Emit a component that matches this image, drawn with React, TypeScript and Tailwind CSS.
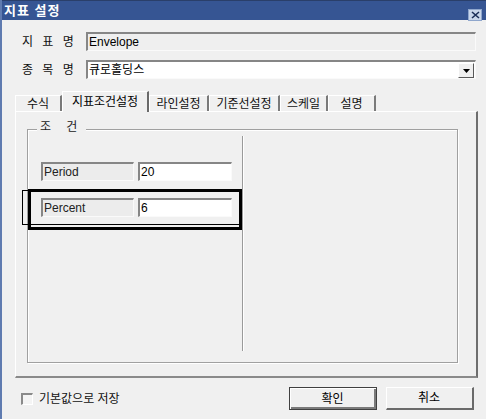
const font = { fontFamily: '"Liberation Sans", "Noto Sans CJK KR", sans-serif' };

// 오목한(sunken) 입력칸 테두리
const sunken =
  'border-t-2 border-l-2 border-b border-r border-t-[#868686] border-l-[#868686] border-b-[#fafafa] border-r-[#fafafa]';

const tabs = [
  { label: '수식', w: 'w-[47px]' },
  { label: '지표조건설정', w: 'w-[87px]', active: true },
  { label: '라인설정', w: 'w-[60px]' },
  { label: '기준선설정', w: 'w-[71px]' },
  { label: '스케일', w: 'w-[48px]' },
  { label: '설명', w: 'w-[48px]' },
];

function Field({ label, value, white }: { label: string; value: string; white?: boolean }) {
  return (
    <div className="flex items-center h-[19px]">
      <div className="shrink-0 w-[84px] pl-[20px] text-[12px] text-[#111] tracking-[3px] whitespace-nowrap">{label}</div>
      <div
        className={`relative shrink-0 w-[390px] h-[19px] ${sunken} ${white ? 'bg-white' : 'bg-[#efefef]'} flex items-center pl-[1px] text-[12px] text-black`}
      >
        {value}
        {white && (
          <div className="absolute right-[1px] top-[1px] w-[16px] h-[15px] bg-[#f0f0f0] border-t border-l border-white border-b border-r border-b-[#5a5a5a] border-r-[#5a5a5a] flex items-center justify-center">
            <svg width="7" height="4" viewBox="0 0 7 4">
              <path d="M0 0 H7 L3.5 4 Z" fill="#000" />
            </svg>
          </div>
        )}
      </div>
    </div>
  );
}

function ParamRow({ label, value }: { label: string; value: string }) {
  return (
    <div className="flex gap-[4px]">
      <div className={`w-[93px] h-[19px] ${sunken} bg-[#ececec] flex items-center pl-[1px] text-[12px] text-[#222]`}>
        {label}
      </div>
      <div className={`w-[94px] h-[19px] ${sunken} bg-white flex items-center pl-[1px] text-[12px] text-black`}>
        {value}
      </div>
    </div>
  );
}

export default function App() {
  return (
    <div
      className="relative w-[486px] h-[419px] overflow-hidden bg-[#f0f0f0] border-l-2 border-[#5f7bb0] flex flex-col"
      style={font}
    >
      {/* 타이틀 바 */}
      <div className="h-[20px] bg-[#365593] border-t border-[#2a3f6a] flex items-center justify-between pl-[2px] pr-[4px]">
        <span className="text-white font-bold text-[13px] tracking-[1px] leading-none">지표 설정</span>
        <div className="w-[14px] h-[12px] mt-[8px] bg-[#c9d6ea] border border-[#8fa6cc] flex items-center justify-center">
          <svg width="9" height="8" viewBox="0 0 9 8">
            <path d="M1 1 L8 7 M8 1 L1 7" stroke="#1b2e57" strokeWidth="1.6" />
          </svg>
        </div>
      </div>

      {/* 입력 필드 */}
      <div className="mt-[12px] flex flex-col gap-[9px]">
        <Field label="지 표 명" value="Envelope" />
        <Field label="종 목 명" value="큐로홀딩스" white />
      </div>

      {/* 탭 */}
      <div className="mt-[12px] ml-[13px] flex items-end h-[20px]">
        {tabs.map((t) =>
          t.active ? (
            <div
              key={t.label}
              className={`${t.w} h-[21px] -mb-[1px] z-10 bg-[#f0f0f0] border-t border-l border-white border-r-2 border-r-[#6a6a6a] flex items-center justify-center text-[12px] text-black`}
            >
              {t.label}
            </div>
          ) : (
            <div
              key={t.label}
              className={`${t.w} h-[16px] border-t border-l border-white border-r-2 border-r-[#7a7a7a] flex items-center justify-center text-[12px] text-[#111] bg-[#f0f0f0]`}
            >
              {t.label}
            </div>
          )
        )}
      </div>

      {/* 탭 패널 */}
      <div className="ml-[13px] w-[463px] h-[267px] border-t border-l border-white border-r-2 border-b-2 border-r-[#6e6e6e] border-b-[#8a8a8a] pt-[17px] pl-[11px]">
        <div className="relative w-[431px] h-[234px] border border-[#a0a0a0] shadow-[inset_1px_1px_0_#ffffff,1px_1px_0_#ffffff] flex">
          <span className="absolute -top-[9px] left-[9px] px-[3px] bg-[#f0f0f0] text-[12px] text-[#222] tracking-[6px] leading-none">
            조 건
          </span>
          <div className="w-[214px] pl-[13px] pt-[32px] flex flex-col gap-[17px]">
            <ParamRow label="Period" value="20" />
            <ParamRow label="Percent" value="6" />
          </div>
          <div className="mt-[6px] h-[215px] w-[2px] border-l border-[#9a9a9a] border-r border-r-white" />
        </div>
      </div>

      {/* 하단 */}
      <div className="mt-[9px] flex items-center">
        <div className="ml-[19px] w-[12px] h-[12px] border-t-2 border-l-2 border-t-[#8a8a8a] border-l-[#8a8a8a] border-b border-r border-b-white border-r-white bg-[#f4f4f4]" />
        <span className="ml-[6px] text-[12px] text-[#111]">기본값으로 저장</span>
        <button className="ml-[169px] w-[88px] h-[23px] bg-[#f0f0f0] border border-[#404040] shadow-[inset_1px_1px_0_#ffffff,inset_-2px_-2px_0_#7a7a7a] text-[12px] text-black">
          확인
        </button>
        <button className="ml-[9px] w-[88px] h-[23px] bg-[#f0f0f0] border-t border-l border-white border-b-2 border-r-2 border-b-[#6a6a6a] border-r-[#6a6a6a] text-[12px] text-black">
          취소
        </button>
      </div>

      {/* 강조 표시 (주석 사각형) */}
      <div className="absolute left-[20px] top-[190px] w-[220px] h-[35px] border border-black pointer-events-none" />
      <div className="absolute left-[26px] top-[189px] w-[214px] h-[41px] border-[3px] border-black pointer-events-none" />
    </div>
  );
}
